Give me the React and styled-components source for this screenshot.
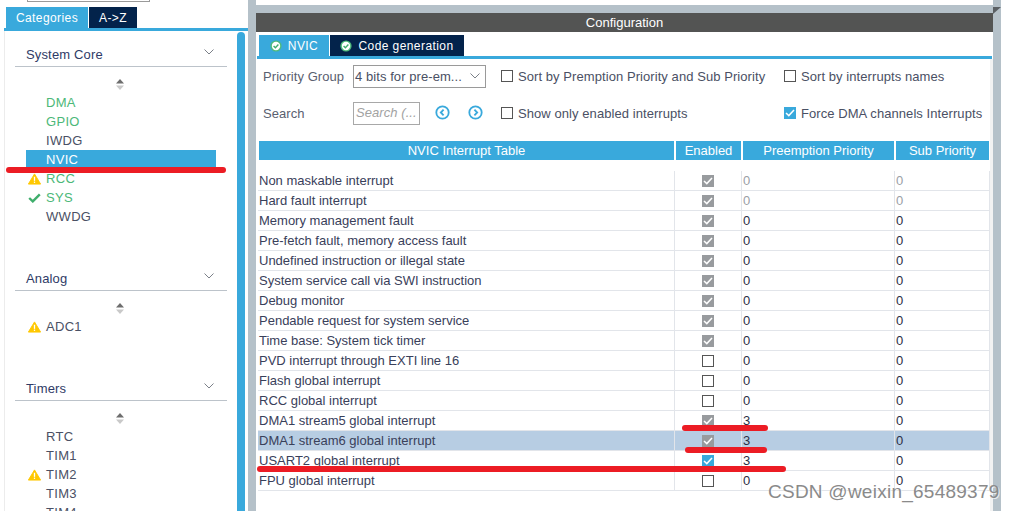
import React from "react";
import styled, { createGlobalStyle } from "styled-components";

const GlobalStyle = createGlobalStyle`
    html, body {
        margin: 0;
        padding: 0;
        background: #fff;
    }
    body {
        font-family: "Liberation Sans", Arial, sans-serif;
        color: #39405a;
        overflow: hidden;
    }
`;

const BLUE = "#39a9dc";
const NAVY = "#03234b";
const GRAY = "#b5c1c9";

const Page = styled.div`
    position: relative;
    display: flex;
    width: 1015px;
    height: 511px;
    overflow: hidden;
    background: #fff;
`;

const LeftPane = styled.div`
    display: flex;
    flex-direction: column;
    width: 248px;
    height: 511px;
    flex-shrink: 0;
`;

const TopField = styled.div`
    width: 123px;
    height: 2px;
    margin-left: 27px;
    margin-bottom: 5px;
    border: 1px solid #9a9a9a;
    border-top: 0;
    box-sizing: border-box;
`;

const TabRow = styled.div`
    display: flex;
    gap: 1px;
    height: 21px;
    padding-left: ${(p) => p.$left}px;
`;

const Tab = styled.div`
    display: flex;
    align-items: center;
    justify-content: center;
    gap: 6px;
    width: ${(p) => p.$width}px;
    background: ${(p) => (p.$active ? BLUE : NAVY)};
    color: #fff;
    font-size: 12px;
    letter-spacing: 0.42px;
`;

const LeftBody = styled.div`
    display: flex;
    flex: 1;
    min-height: 0;
    margin-left: 4px;
    border-top: 3px solid ${BLUE};
`;

const LeftList = styled.div`
    width: 233px;
    padding: 10px 10px 0 11px;
    box-sizing: border-box;
    overflow: hidden;
    border-left: 1px solid #ececec;
`;

const Scrollbar = styled.div`
    width: 8px;
    margin-top: 1px;
    background: ${BLUE};
    border-radius: 4px 4px 0 0;
`;

const Category = styled.section`
    height: ${(p) => p.$height}px;
    margin-left: -1px;
`;

const CategoryHead = styled.div`
    display: flex;
    align-items: center;
    justify-content: space-between;
    height: 26px;
    padding: 2px 13px 0 11px;
    box-sizing: border-box;
    border-bottom: 1px solid #bcc3ca;
    font-size: 13px;
    letter-spacing: 0.15px;
    color: #2f3b66;
`;

const Spinner = styled.div`
    display: flex;
    justify-content: center;
    height: 26px;
    padding: 12px 2px 0 0;
    box-sizing: border-box;
`;

const ItemRow = styled.div`
    display: flex;
    align-items: center;
    width: 190px;
    height: 19px;
    margin-left: 11px;
    background: ${(p) => (p.$selected ? BLUE : "transparent")};
    color: ${(p) => (p.$selected ? "#fff" : p.$ok ? "#4cb878" : "#4a5064")};
    font-size: 13px;
    letter-spacing: 0.3px;
`;

const ItemIcon = styled.span`
    display: flex;
    align-items: center;
    width: 20px;
    padding-left: 2px;
    box-sizing: border-box;
    flex-shrink: 0;
`;

const Splitter = styled.div`
    width: 8px;
    height: 511px;
    background: ${GRAY};
    flex-shrink: 0;
`;

const RightPane = styled.div`
    display: flex;
    flex-direction: column;
    width: 737px;
    flex-shrink: 0;
`;

const TopWhite = styled.div`
    height: 5px;
`;

const TopBand = styled.div`
    height: 8px;
    background: ${GRAY};
`;

const ConfigTitle = styled.div`
    display: flex;
    align-items: center;
    justify-content: center;
    height: 19px;
    background: #535453;
    color: #fff;
    font-size: 13px;
`;

const TabBar = styled.div`
    padding-top: 3px;
`;

const TabLine = styled.div`
    height: 3px;
    margin-left: 1px;
    width: 735px;
    background: ${BLUE};
`;

const Content = styled.div`
    flex: 1;
    border-right: 3px solid #f2f2f2;
`;

const Options = styled.div`
    display: grid;
    grid-template-columns: 238px 283px 1fr;
    grid-template-rows: 34px 34px;
    row-gap: 3px;
    height: 82px;
    padding-left: 7px;
    align-items: center;
    color: #4a5064;
    font-size: 13px;
    letter-spacing: 0.07px;
`;

const ControlCell = styled.div`
    display: flex;
    align-items: center;
`;

const OptionLabel = styled.span`
    width: 90px;
    color: #5a6070;
`;

const SelectBox = styled.div`
    display: flex;
    align-items: center;
    justify-content: space-between;
    width: 133px;
    height: 23px;
    padding: 0 5px 0 1px;
    border: 1px solid #9a9a9a;
    box-sizing: border-box;
    white-space: nowrap;
`;

const SearchBox = styled.div`
    width: 67px;
    height: 23px;
    padding-left: 2px;
    border: 1px solid #a8a8a8;
    box-sizing: border-box;
    color: #a2a2a2;
    font-size: 13px;
    font-style: italic;
    line-height: 20px;
    white-space: nowrap;
`;

const NavButtons = styled.div`
    display: flex;
    gap: 18px;
    margin: 0 0 2px 15px;
`;

const CheckLabel = styled.label`
    display: flex;
    align-items: center;
    gap: 5px;
    white-space: nowrap;
`;

const Box = styled.span`
    display: flex;
    align-items: center;
    justify-content: center;
    width: 12px;
    height: 12px;
    box-sizing: border-box;
    border: ${(p) => (p.$variant === "empty" ? "1px solid #555" : "0")};
    background: ${(p) =>
        p.$variant === "blue" ? BLUE : p.$variant === "gray" ? "#989b9e" : "#fff"};
    flex-shrink: 0;
`;

const Table = styled.div`
    margin-left: 3px;
    width: 731px;
`;

const TableHead = styled.div`
    display: grid;
    grid-template-columns: 415px 65px 151px 93px;
    column-gap: 2px;
    height: 19px;
    margin-bottom: 11px;
`;

const HeadCell = styled.div`
    display: flex;
    align-items: center;
    justify-content: center;
    background: ${BLUE};
    color: #fff;
    font-size: 13px;
`;

const Row = styled.div`
    display: grid;
    grid-template-columns: 416px 67px 153px 95px;
    width: 732px;
    height: 20px;
    margin-left: -1px;
    box-sizing: border-box;
    border-bottom: 1px solid #e2e5ea;
    border-right: 1px solid #e2e5ea;
    background: ${(p) => (p.$selected ? "#b7cde3" : "transparent")};
    font-size: 13px;
    color: #39405a;
`;

const NameCell = styled.div`
    display: flex;
    align-items: center;
    padding-left: 1px;
    white-space: nowrap;
`;

const EnabledCell = styled.div`
    display: flex;
    align-items: center;
    justify-content: center;
    border-left: 1px solid #e2e5ea;
`;

const ValueCell = styled.div`
    display: flex;
    align-items: center;
    padding-left: 1px;
    border-left: 1px solid #e2e5ea;
    color: ${(p) => (p.$muted ? "#9aa0a6" : "#2b2f45")};
`;

const RedMark = styled.div`
    position: absolute;
    left: ${(p) => p.$x}px;
    top: ${(p) => p.$y}px;
    width: ${(p) => p.$w}px;
    height: 6px;
    border-radius: 3px;
    background: #ec1c24;
`;

const Watermark = styled.div`
    position: absolute;
    left: 768px;
    top: 481px;
    color: #8a8a8a;
    font-size: 19px;
    letter-spacing: 0.25px;
    white-space: nowrap;
    text-shadow: 1px 1px 0 rgba(255, 255, 255, 0.7);
`;

const ChevronSvg = styled.svg`
    margin-bottom: ${(p) => p.$lift || 0}px;
`;

const Chevron = ({ lift }) => (
    <ChevronSvg $lift={lift} width="10" height="6" viewBox="0 0 10 6" fill="none">
        <path d="M0.5 0.5L5 5l4.5-4.5" stroke="#7b8088" strokeWidth="1" />
    </ChevronSvg>
);

const Warning = () => (
    <svg width="13" height="12" viewBox="0 0 14 12">
        <path d="M7 0.5L13.6 11.5H0.4z" fill="#ffc800" stroke="#ffc800" strokeLinejoin="round" />
        <rect x="6.3" y="3.6" width="1.4" height="4.4" fill="#fff" />
        <rect x="6.3" y="8.8" width="1.4" height="1.4" fill="#fff" />
    </svg>
);

const GreenCheck = () => (
    <svg width="13" height="10" viewBox="0 0 13 10" fill="none">
        <path d="M1.2 5l3.6 3.4L11.8 1.4" stroke="#3fae6c" strokeWidth="2.4" />
    </svg>
);

const UpDown = () => (
    <svg width="8" height="11" viewBox="0 0 8 11">
        <path d="M4 0l4 4.6H0z" fill="#6d6d6d" />
        <path d="M4 11L0 6.4h8z" fill="#c9c9c9" />
    </svg>
);

const TabCheck = () => (
    <svg width="12" height="12" viewBox="0 0 12 12">
        <circle cx="6" cy="6" r="5.6" fill="#4fbb7c" />
        <circle cx="6" cy="6" r="4.2" fill="#fff" />
        <path d="M3.6 6l1.8 1.8 3-3.2" fill="none" stroke="#3fae6c" strokeWidth="1.4" />
    </svg>
);

const NavCircle = ({ dir }) => (
    <svg width="15" height="15" viewBox="0 0 15 15" fill="none">
        <circle cx="7.5" cy="7.5" r="6.2" stroke={BLUE} strokeWidth="1.8" />
        <path
            d={dir === "left" ? "M8.6 4.6L5.8 7.5l2.8 2.9" : "M6.4 4.6l2.8 2.9-2.8 2.9"}
            stroke={BLUE}
            strokeWidth="1.8"
        />
    </svg>
);

const Tick = () => (
    <svg width="10" height="8" viewBox="0 0 10 8" fill="none">
        <path d="M1 4l2.8 2.6L9 1" stroke="#fff" strokeWidth="1.5" />
    </svg>
);

const CornerMark = () => (
    <svg width="8" height="7" viewBox="0 0 8 7">
        <path d="M0 0h8L0 7z" fill="#5a5f63" />
    </svg>
);

const CheckBox = ({ variant }) => (
    <Box $variant={variant}>{variant !== "empty" && <Tick />}</Box>
);

const categories = [
    {
        title: "System Core",
        height: 224,
        items: [
            { name: "DMA", ok: true },
            { name: "GPIO", ok: true },
            { name: "IWDG" },
            { name: "NVIC", selected: true },
            { name: "RCC", ok: true, icon: "warn" },
            { name: "SYS", ok: true, icon: "check" },
            { name: "WWDG" },
        ],
    },
    { title: "Analog", height: 110, items: [{ name: "ADC1", icon: "warn" }] },
    {
        title: "Timers",
        height: 140,
        items: [
            { name: "RTC" },
            { name: "TIM1" },
            { name: "TIM2", icon: "warn" },
            { name: "TIM3" },
            { name: "TIM4" },
        ],
    },
];

const interrupts = [
    { name: "Non maskable interrupt", on: "gray", pre: "0", muted: true },
    { name: "Hard fault interrupt", on: "gray", pre: "0", muted: true },
    { name: "Memory management fault", on: "gray", pre: "0" },
    { name: "Pre-fetch fault, memory access fault", on: "gray", pre: "0" },
    { name: "Undefined instruction or illegal state", on: "gray", pre: "0" },
    { name: "System service call via SWI instruction", on: "gray", pre: "0" },
    { name: "Debug monitor", on: "gray", pre: "0" },
    { name: "Pendable request for system service", on: "gray", pre: "0" },
    { name: "Time base: System tick timer", on: "gray", pre: "0" },
    { name: "PVD interrupt through EXTI line 16", on: "empty", pre: "0" },
    { name: "Flash global interrupt", on: "empty", pre: "0" },
    { name: "RCC global interrupt", on: "empty", pre: "0" },
    { name: "DMA1 stream5 global interrupt", on: "gray", pre: "3" },
    { name: "DMA1 stream6 global interrupt", on: "gray", pre: "3", selected: true },
    { name: "USART2 global interrupt", on: "blue", pre: "3" },
    { name: "FPU global interrupt", on: "empty", pre: "0" },
];

const App = () => (
    <Page>
        <GlobalStyle />
        <LeftPane>
            <TopField />
            <TabRow $left={6}>
                <Tab $active $width={82}>Categories</Tab>
                <Tab $width={48}>A-&gt;Z</Tab>
            </TabRow>
            <LeftBody>
                <LeftList>
                    {categories.map((cat) => (
                        <Category key={cat.title} $height={cat.height}>
                            <CategoryHead>
                                {cat.title}
                                <Chevron lift={5} />
                            </CategoryHead>
                            <Spinner><UpDown /></Spinner>
                            {cat.items.map((item) => (
                                <ItemRow key={item.name} $selected={item.selected} $ok={item.ok}>
                                    <ItemIcon>
                                        {item.icon === "warn" && <Warning />}
                                        {item.icon === "check" && <GreenCheck />}
                                    </ItemIcon>
                                    {item.name}
                                </ItemRow>
                            ))}
                        </Category>
                    ))}
                </LeftList>
                <Scrollbar />
            </LeftBody>
        </LeftPane>
        <Splitter />
        <RightPane>
            <TopWhite />
            <TopBand />
            <ConfigTitle>Configuration</ConfigTitle>
            <TabBar>
                <TabRow $left={3}>
                    <Tab $active $width={70}><TabCheck />NVIC</Tab>
                    <Tab $width={134}><TabCheck />Code generation</Tab>
                </TabRow>
                <TabLine />
            </TabBar>
            <Content>
                <Options>
                    <ControlCell>
                        <OptionLabel>Priority Group</OptionLabel>
                        <SelectBox>4 bits for pre-em...<Chevron /></SelectBox>
                    </ControlCell>
                    <CheckLabel><CheckBox variant="empty" />Sort by Premption Priority and Sub Priority</CheckLabel>
                    <CheckLabel><CheckBox variant="empty" />Sort by interrupts names</CheckLabel>
                    <ControlCell>
                        <OptionLabel>Search</OptionLabel>
                        <SearchBox>Search (...</SearchBox>
                        <NavButtons>
                            <NavCircle dir="left" />
                            <NavCircle dir="right" />
                        </NavButtons>
                    </ControlCell>
                    <CheckLabel><CheckBox variant="empty" />Show only enabled interrupts</CheckLabel>
                    <CheckLabel><CheckBox variant="blue" />Force DMA channels Interrupts</CheckLabel>
                </Options>
                <Table>
                    <TableHead>
                        <HeadCell>NVIC Interrupt Table</HeadCell>
                        <HeadCell>Enabled</HeadCell>
                        <HeadCell>Preemption Priority</HeadCell>
                        <HeadCell>Sub Priority</HeadCell>
                    </TableHead>
                    {interrupts.map((row) => (
                        <Row key={row.name} $selected={row.selected}>
                            <NameCell>{row.name}</NameCell>
                            <EnabledCell><CheckBox variant={row.on} /></EnabledCell>
                            <ValueCell $muted={row.muted}>{row.pre}</ValueCell>
                            <ValueCell $muted={row.muted}>0</ValueCell>
                        </Row>
                    ))}
                </Table>
            </Content>
        </RightPane>
        <Splitter><CornerMark /></Splitter>
        <RedMark $x={6} $y={167} $w={220} />
        <RedMark $x={682} $y={425} $w={86} />
        <RedMark $x={685} $y={447} $w={82} />
        <RedMark $x={257} $y={466} $w={529} />
        <Watermark>CSDN @weixin_65489379</Watermark>
    </Page>
);

export default App;
